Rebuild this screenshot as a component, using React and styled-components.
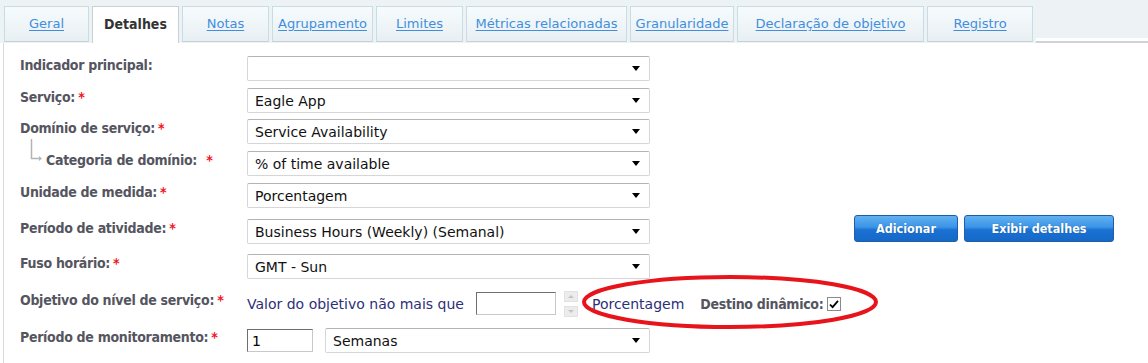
import React from 'react';
import styled, { createGlobalStyle } from 'styled-components';

const GlobalStyle = createGlobalStyle`
    body {
        margin: 0;
        background: #ffffff;
        font-family: "DejaVu Sans", Verdana, sans-serif;
    }
`;

const BOLD_FONT = '"DejaVu Sans Condensed", "DejaVu Sans", Verdana, sans-serif';

const tabs = [
    { title: 'Geral', width: 85 },
    { title: 'Detalhes', width: 87, active: true },
    { title: 'Notas', width: 87 },
    { title: 'Agrupamento', width: 101 },
    { title: 'Limites', width: 87 },
    { title: 'Métricas relacionadas', width: 161 },
    { title: 'Granularidade', width: 104 },
    { title: 'Declaração de objetivo', width: 187 },
    { title: 'Registro', width: 106 },
];

const selectRows = [
    { label: 'Indicador principal:', value: '', required: false, top: 13 },
    { label: 'Serviço:', value: 'Eagle App', required: true, top: 7 },
    { label: 'Domínio de serviço:', value: 'Service Availability', required: true, top: 6 },
    { label: 'Categoria de domínio:', value: '% of time available', required: true, top: 7, child: true },
    { label: 'Unidade de medida:', value: 'Porcentagem', required: true, top: 7 },
];

export default function App() {
    return (
        <Page>
            <GlobalStyle />
            <TabBar>
                {tabs.map((tab) => (
                    <Tab key={tab.title} active={tab.active} width={tab.width}>
                        <TabLabel active={tab.active}>{tab.title}</TabLabel>
                    </Tab>
                ))}
                <TabFiller />
            </TabBar>

            <Panel>
                {selectRows.map((row) => (
                    <Row key={row.label} top={row.top}>
                        <Label child={row.child}>
                            {row.child && <TreeConnector />}
                            {row.label}
                            {row.required && <Required spaced={row.child}>*</Required>}
                        </Label>
                        <SelectBox value={row.value} />
                    </Row>
                ))}

                <Row top={11}>
                    <Label>
                        Período de atividade:<Required>*</Required>
                    </Label>
                    <SelectBox value="Business Hours (Weekly) (Semanal)" />
                    <Actions>
                        <BlueButton width={104}>Adicionar</BlueButton>
                        <BlueButton width={150}>Exibir detalhes</BlueButton>
                    </Actions>
                </Row>

                <Row top={10}>
                    <Label>
                        Fuso horário:<Required>*</Required>
                    </Label>
                    <SelectBox value="GMT - Sun" />
                </Row>

                <Row top={11} height={27}>
                    <Label>
                        Objetivo do nível de serviço:<Required>*</Required>
                    </Label>
                    <InlineText>Valor do objetivo não mais que</InlineText>
                    <TextInput width={80} gap={12} />
                    <Spinner>
                        <SpinButton><SpinArrow /></SpinButton>
                        <SpinButton><SpinArrow down /></SpinButton>
                    </Spinner>
                    <UnitText>Porcentagem</UnitText>
                    <InlineLabel>Destino dinâmico:</InlineLabel>
                    <CheckBox>
                        <svg width="12" height="12" viewBox="0 0 12 12">
                            <path d="M2 6.5 L4.6 9.2 L10 2.8" fill="none" stroke="#000" strokeWidth="1.8" />
                        </svg>
                    </CheckBox>
                </Row>

                <Row top={11}>
                    <Label>
                        Período de monitoramento:<Required>*</Required>
                    </Label>
                    <TextInput width={66} defaultValue="1" />
                    <SelectBox value="Semanas" width={325} gap={12} />
                </Row>
            </Panel>

            <Annotation width="302" height="60" viewBox="0 0 302 60">
                <ellipse cx="150" cy="29" rx="146" ry="25" fill="none" stroke="#e8141b" strokeWidth="4" />
            </Annotation>
        </Page>
    );
}

function SelectBox({ value, width, gap }) {
    return (
        <SelectFrame width={width} gap={gap}>
            <SelectValue>{value}</SelectValue>
            <Caret />
        </SelectFrame>
    );
}

function TreeConnector() {
    return (
        <TreeIcon width="14" height="22" viewBox="0 0 14 22">
            <path d="M1.5 0 V19.5 H10" fill="none" stroke="#b4b4b4" strokeWidth="1.5" />
            <path d="M9 17 L12 19.5 L9 22 Z" fill="#b4b4b4" />
        </TreeIcon>
    );
}

const Page = styled.div`
    position: relative;
    width: 1148px;
    height: 363px;
    overflow: hidden;
    background: #ffffff;
`;

const TabBar = styled.div`
    display: flex;
    align-items: flex-end;
    gap: 3px;
    height: 43px;
    padding: 0 0 0 4px;
    box-sizing: border-box;
    background: #edf2f5;
`;

const Tab = styled.div`
    display: flex;
    align-items: center;
    justify-content: center;
    flex-shrink: 0;
    width: ${({ width }) => width}px;
    padding-bottom: 2px;
    box-sizing: border-box;
    height: ${({ active }) => (active ? '37px' : '36px')};
    margin-bottom: ${({ active }) => (active ? '0' : '1px')};
    border: 1px solid ${({ active }) => (active ? '#c9d0d4' : '#c6dde6')};
    border-bottom: ${({ active }) => (active ? 'none' : '1px solid #c9d0d4')};
    background: ${({ active }) =>
        active ? '#ffffff' : 'linear-gradient(#f7fbfc, #e8eff3)'};
`;

const TabLabel = styled.span`
    font-family: ${({ active }) => (active ? BOLD_FONT : 'inherit')};
    font-size: ${({ active }) => (active ? '14px' : '13px')};
    font-weight: ${({ active }) => (active ? 700 : 400)};
    color: ${({ active }) => (active ? '#333333' : '#3f8fde')};
    text-decoration: ${({ active }) => (active ? 'none' : 'underline')};
    text-underline-offset: 2px;
    white-space: nowrap;
`;

const TabFiller = styled.div`
    flex: 1;
    align-self: stretch;
    border-bottom: 2px solid #cfd3d6;
    box-shadow: inset 0 -3px 0 #ffffff;
`;

const Panel = styled.div`
    display: flex;
    flex-direction: column;
    height: 320px;
    padding-left: 16px;
    border-left: 1px solid #d3dce1;
    margin-left: 3px;
`;

const Row = styled.div`
    display: flex;
    align-items: center;
    height: ${({ height }) => height || 25}px;
    margin-top: ${({ top }) => top}px;
`;

const Label = styled.div`
    display: flex;
    align-items: flex-end;
    width: 227px;
    flex-shrink: 0;
    padding-left: ${({ child }) => (child ? '10px' : '0')};
    padding-bottom: 8px;
    box-sizing: border-box;
    font-family: ${BOLD_FONT};
    font-size: 14px;
    font-weight: 700;
    letter-spacing: -0.3px;
    color: #55555f;
    white-space: nowrap;
`;

const TreeIcon = styled.svg`
    flex-shrink: 0;
    align-self: flex-start;
    margin: -13px 2px 0 0;
`;

const Required = styled.span`
    color: #f0131b;
    margin-left: ${({ spaced }) => (spaced ? '9px' : '3px')};
`;

const SelectFrame = styled.div`
    display: flex;
    align-items: center;
    flex-shrink: 0;
    width: ${({ width }) => width || 403}px;
    margin-left: ${({ gap }) => gap || 0}px;
    height: 25px;
    padding: 0 9px 0 7px;
    box-sizing: border-box;
    border: 1px solid #d6d6d6;
    border-top-color: #b4b4b4;
    border-radius: 2px;
    background: #ffffff;
`;

const SelectValue = styled.span`
    flex: 1;
    font-size: 14px;
    color: #111111;
    white-space: nowrap;
`;

const Caret = styled.span`
    width: 0;
    height: 0;
    border-left: 4px solid transparent;
    border-right: 4px solid transparent;
    border-top: 5px solid #000000;
`;

const Actions = styled.div`
    display: flex;
    gap: 6px;
    align-self: flex-start;
    margin: -4px 0 0 204px;
`;

const BlueButton = styled.button`
    width: ${({ width }) => width}px;
    height: 27px;
    padding: 0;
    border: 1px solid #1c5ea8;
    border-radius: 3px;
    background: linear-gradient(#62b2f2 0%, #3a93e6 45%, #1b72d3 55%, #1468c8 100%);
    color: #ffffff;
    font-family: ${BOLD_FONT};
    font-size: 12.5px;
    font-weight: 700;
    text-shadow: 0 0 1px rgba(0, 0, 0, 0.35);
    cursor: pointer;
`;

const InlineText = styled.span`
    font-size: 14px;
    color: #2d2f78;
    white-space: nowrap;
`;

const TextInput = styled.input`
    flex-shrink: 0;
    width: ${({ width }) => width}px;
    height: 23px;
    margin-left: ${({ gap }) => gap || 0}px;
    padding: 0 4px;
    box-sizing: border-box;
    border: 1px solid #c8c8c8;
    border-top-color: #6e6e6e;
    border-left-color: #6e6e6e;
    font-family: "DejaVu Sans", Verdana, sans-serif;
    font-size: 14px;
    color: #000000;
    outline: none;
`;

const Spinner = styled.div`
    display: flex;
    flex-direction: column;
    gap: 4px;
    margin-left: 8px;
`;

const SpinButton = styled.div`
    display: flex;
    align-items: center;
    justify-content: center;
    width: 14px;
    height: 11px;
    background: #ececec;
    border: 1px solid #e2e2e2;
    box-sizing: border-box;
`;

const SpinArrow = styled.span`
    width: 0;
    height: 0;
    border-left: 3px solid transparent;
    border-right: 3px solid transparent;
    ${({ down }) => (down ? 'border-top: 3px solid #c4c4c4;' : 'border-bottom: 3px solid #c4c4c4;')}
`;

const UnitText = styled.span`
    margin-left: 14px;
    font-size: 14px;
    color: #2d2f78;
    white-space: nowrap;
`;

const InlineLabel = styled.span`
    margin-left: 16px;
    font-family: ${BOLD_FONT};
    font-size: 14px;
    font-weight: 700;
    letter-spacing: -0.3px;
    color: #55555f;
    white-space: nowrap;
`;

const CheckBox = styled.span`
    display: flex;
    align-items: center;
    justify-content: center;
    width: 14px;
    height: 14px;
    margin-left: 4px;
    box-sizing: border-box;
    border: 1px solid #8a8a8a;
    background: #ffffff;
`;

const Annotation = styled.svg`
    position: absolute;
    left: 580px;
    top: 273px;
    pointer-events: none;
`;
